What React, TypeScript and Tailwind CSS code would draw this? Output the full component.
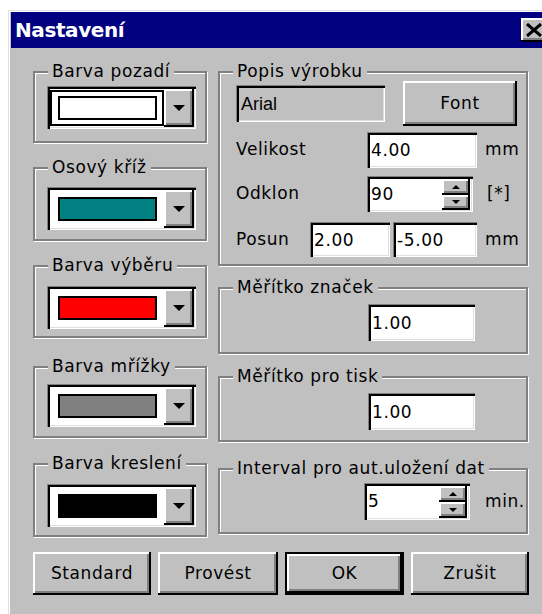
import React from 'react';

// classic 3D bevels
const raised = 'shadow-[inset_-2px_-2px_0_#000,inset_2px_2px_0_#fff,inset_-4px_-4px_0_#808080]';
const sunken = 'shadow-[inset_1px_1px_0_#808080,inset_3px_3px_0_#000,inset_-1px_-1px_0_#fff,inset_-2px_-2px_0_#dfdfdf]';
const etched = 'border-2 border-[#808080] shadow-[inset_1px_1px_0_#fff,1px_1px_0_#fff]';

const Group = ({ label, className, children }: { label: string; className?: string; children?: React.ReactNode }) => (
  <div className={`relative ${etched} ${className ?? ''}`}>
    <span className="absolute -top-[12px] left-[13px] bg-[#c0c0c0] px-[4px] leading-[21px] whitespace-nowrap">{label}</span>
    {children}
  </div>
);

const ArrowDown = ({ size = 6 }: { size?: number }) =>
  size === 6 ? (
    <div className="h-0 w-0 border-x-[6px] border-t-[6px] border-x-transparent border-t-black" />
  ) : (
    <div className="h-0 w-0 border-x-[4px] border-t-[4px] border-x-transparent border-t-black" />
  );

const ArrowUp = () => <div className="h-0 w-0 border-x-[4px] border-b-[4px] border-x-transparent border-b-black" />;

const ColorCombo = ({ swatch, focused }: { swatch: string; focused?: boolean }) => (
  <div className={`flex h-[43px] w-[149px] bg-white pt-[3px] pl-[3px] pr-[2px] pb-[2px] ${sunken}`}>
    <div className="flex flex-1 items-center">
      {focused ? (
        <div className="flex h-[36px] w-full items-center border-2 border-black pl-[6px]">
          <div className={`h-[24px] w-[99px] border-2 border-black ${swatch}`} />
        </div>
      ) : (
        <div className={`ml-[8px] h-[24px] w-[99px] border-2 border-black ${swatch}`} />
      )}
    </div>
    <div className={`flex w-[30px] items-center justify-center bg-[#c0c0c0] ${raised}`}>
      <ArrowDown />
    </div>
  </div>
);

const Field = ({ value, className }: { value: string; className?: string }) => (
  <div className={`flex items-center bg-white pl-[4px] pt-[2px] ${sunken} ${className ?? ''}`}>{value}</div>
);

const SpinField = ({ value, className }: { value: string; className?: string }) => (
  <div className={`flex bg-white pt-[3px] pl-[3px] pr-[3px] pb-[2px] ${sunken} ${className ?? ''}`}>
    <div className="flex flex-1 items-center pl-[1px]">{value}</div>
    <div className="flex w-[28px] flex-col">
      <div className={`flex flex-1 items-center justify-center bg-[#c0c0c0] ${raised}`}>
        <ArrowUp />
      </div>
      <div className={`flex flex-1 items-center justify-center bg-[#c0c0c0] ${raised}`}>
        <ArrowDown size={4} />
      </div>
    </div>
  </div>
);

const Button = ({ label, className, isDefault }: { label: string; className?: string; isDefault?: boolean }) =>
  isDefault ? (
    <div className={`border-2 border-black ${className ?? ''}`}>
      <div className={`flex h-full w-full items-center justify-center bg-[#c0c0c0] ${raised}`}>{label}</div>
    </div>
  ) : (
    <div className={`flex items-center justify-center bg-[#c0c0c0] ${raised} ${className ?? ''}`}>{label}</div>
  );

export default function App() {
  return (
    <div className="h-[614px] w-[542px] overflow-hidden bg-white pt-[10px] pl-[8px] font-['DejaVu_Sans',sans-serif] text-[17px] tracking-[0.6px] text-black">
      <div className="h-[620px] w-[545px] bg-[#c0c0c0] pt-[2px] pl-[3px] shadow-[inset_1px_1px_0_#dfdfdf,inset_2px_2px_0_#fff]">
        {/* title bar */}
        <div className="flex h-[36px] items-center bg-[#000080] pl-[4px] pr-[4px]">
          <span className="text-[20px] font-bold tracking-[-0.4px] text-white">Nastavení</span>
          <div className={`ml-auto flex h-[24px] w-[28px] items-center justify-center bg-[#c0c0c0] ${raised}`}>
            <svg width="18" height="14" viewBox="0 0 18 14" className="-mt-[1px] -ml-[2px]">
              <path d="M2 1 L16 13 M16 1 L2 13" stroke="#000" strokeWidth="3" />
            </svg>
          </div>
        </div>

        <div className="flex flex-col pt-[23px] pl-[22px]">
          <div className="flex gap-[11px]">
            {/* colour pickers */}
            <div className="flex w-[174px] flex-col">
              <Group label="Barva pozadí" className="h-[72px] pt-[13px] pl-[12px]">
                <ColorCombo swatch="bg-white" focused />
              </Group>
              <Group label="Osový kříž" className="mt-[24px] h-[74px] pt-[18px] pl-[12px]">
                <ColorCombo swatch="bg-[#008080]" />
              </Group>
              <Group label="Barva výběru" className="mt-[24px] h-[73px] pt-[19px] pl-[12px]">
                <ColorCombo swatch="bg-[#ff0000]" />
              </Group>
              <Group label="Barva mřížky" className="mt-[28px] h-[72px] pt-[16px] pl-[12px]">
                <ColorCombo swatch="bg-[#808080]" />
              </Group>
              <Group label="Barva kreslení" className="mt-[25px] h-[74px] pt-[19px] pl-[12px]">
                <ColorCombo swatch="bg-black" />
              </Group>
            </div>

            {/* text / scale settings */}
            <div className="flex w-[310px] flex-col">
              <Group label="Popis výrobku" className="h-[195px] pt-[8px] pl-[16px]">
                <div className="flex h-[45px] items-center">
                  <div className={`flex h-[37px] w-[149px] items-center bg-[#c0c0c0] pl-[5px] pt-[2px] font-['Liberation_Sans',sans-serif] text-[18px] tracking-normal ${sunken}`}>
                    Arial
                  </div>
                  <Button label="Font" className="ml-[18px] h-[45px] w-[114px]" />
                </div>
                <div className="mt-[6px] flex h-[36px] items-center">
                  <span className="w-[131px]">Velikost</span>
                  <Field value="4.00" className="h-full w-[110px]" />
                  <span className="ml-[8px]">mm</span>
                </div>
                <div className="mt-[8px] flex h-[36px] items-center">
                  <span className="w-[131px]">Odklon</span>
                  <SpinField value="90" className="h-full w-[106px]" />
                  <span className="ml-[14px]">[*]</span>
                </div>
                <div className="mt-[10px] flex h-[35px] items-center">
                  <span className="w-[74px]">Posun</span>
                  <Field value="2.00" className="h-full w-[80px]" />
                  <Field value="-5.00" className="ml-[3px] h-full w-[84px]" />
                  <span className="ml-[8px]">mm</span>
                </div>
              </Group>

              <Group label="Měřítko značek" className="mt-[21px] h-[67px] pt-[15px] pl-[148px]">
                <Field value="1.00" className="h-[37px] w-[107px]" />
              </Group>
              <Group label="Měřítko pro tisk" className="mt-[22px] h-[66px] pt-[15px] pl-[148px]">
                <Field value="1.00" className="h-[37px] w-[107px]" />
              </Group>
              <Group label="Interval pro aut.uložení dat" className="mt-[26px] h-[66px] pt-[13px] pl-[144px]">
                <div className="flex items-center">
                  <SpinField value="5" className="h-[37px] w-[106px]" />
                  <span className="ml-[15px]">min.</span>
                </div>
              </Group>
            </div>
          </div>

          {/* dialog buttons */}
          <div className="mt-[15px] flex gap-[7px]">
            <Button label="Standard" className="h-[43px] w-[118px]" />
            <Button label="Provést" className="h-[43px] w-[120px]" />
            <Button label="OK" className="h-[43px] w-[119px]" isDefault />
            <Button label="Zrušit" className="h-[43px] w-[118px]" />
          </div>
        </div>
      </div>
    </div>
  );
}
